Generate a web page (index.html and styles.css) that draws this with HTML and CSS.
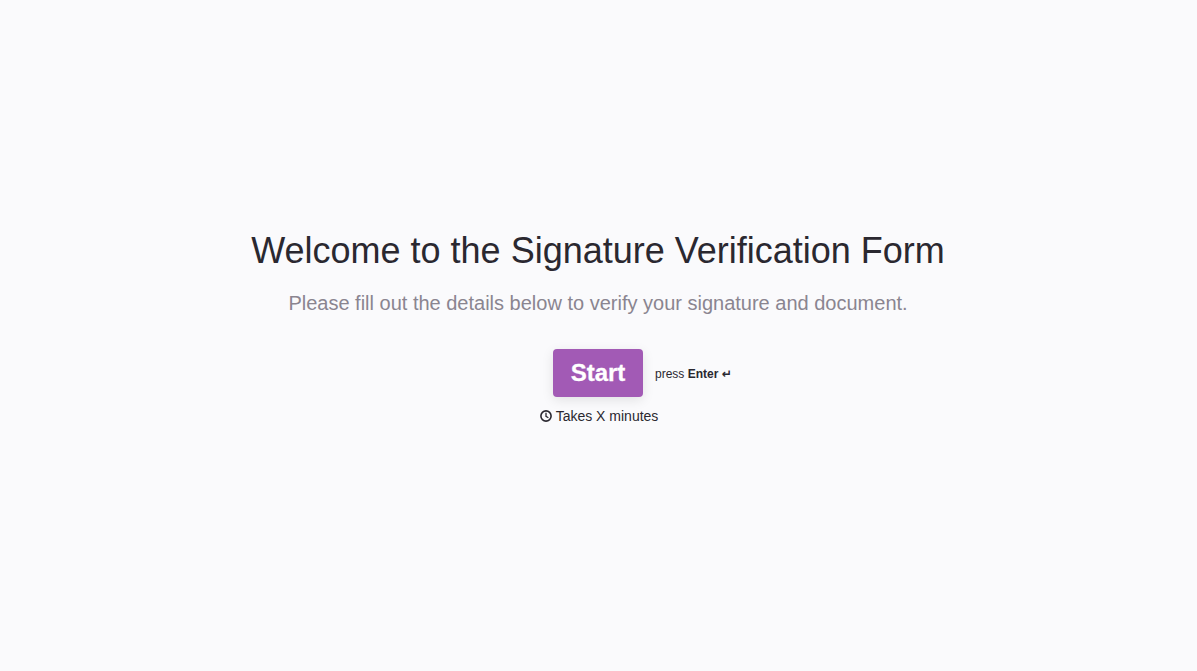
FILE: index.html
```html
<!DOCTYPE html>
<html lang="en">
<head>
    <meta charset="UTF-8">
    <title>Signature Verification Form</title>
    <link rel="stylesheet" href="styles.css">
</head>
<body>
    <div class="welcome">
        <h1 class="title">Welcome to the Signature Verification Form</h1>
        <p class="subtitle">Please fill out the details below to verify your signature and document.</p>
        <div class="start-row">
            <button class="start-btn" type="button">Start</button>
            <span class="hint">press <b>Enter</b> <span class="enter-icon">↵</span></span>
        </div>
        <div class="time-note">
            <svg class="clock" viewBox="0 0 12 12" width="12" height="12" aria-hidden="true">
                <circle cx="6" cy="6" r="5.1" fill="none" stroke="currentColor" stroke-width="1.6"/>
                <path d="M6 2.8V6.3L8.4 7.7" fill="none" stroke="currentColor" stroke-width="1.3"/>
            </svg>
            <span>Takes X minutes</span>
        </div>
    </div>
</body>
</html>
```

FILE: styles.css
```css
* {
    box-sizing: border-box;
}
html,
body {
    height: 100%;
    margin: 0;
    padding: 0;
}
body {
    display: flex;
    align-items: center;
    justify-content: center;
    background-color: #fafafc;
    color: #2a2830;
    font-family: "Liberation Sans", Arial, sans-serif;
}
.welcome {
    width: 100%;
    padding: 0 1px 18px 0;
    text-align: center;
}
.title {
    margin: 0;
    font-size: 36px;
    line-height: 44px;
    font-weight: 400;
}
.subtitle {
    margin: 16px 0 0;
    font-size: 20px;
    line-height: 28px;
    color: #8a8590;
}
.start-row {
    display: grid;
    grid-template-columns: 1fr auto 1fr;
    align-items: center;
    margin-top: 32px;
}
.start-btn {
    grid-column: 2;
    width: 90px;
    height: 48px;
    border: 0;
    border-radius: 4px;
    background-color: #a25ab5;
    box-shadow: 0 3px 12px rgba(0, 0, 0, 0.1);
    color: #fff;
    font-family: inherit;
    font-size: 24px;
    font-weight: 700;
    -webkit-text-stroke: 0.3px #fff;
}
.hint {
    grid-column: 3;
    justify-self: start;
    margin: 2px 0 0 12px;
    font-size: 12px;
}
.enter-icon {
    font-family: "DejaVu Sans", sans-serif;
    font-size: 12px;
    font-weight: 700;
}
.time-note {
    display: flex;
    align-items: center;
    justify-content: center;
    gap: 4px;
    margin-top: 10px;
    padding-left: 2px;
    font-size: 14px;
    line-height: 18px;
}
```
